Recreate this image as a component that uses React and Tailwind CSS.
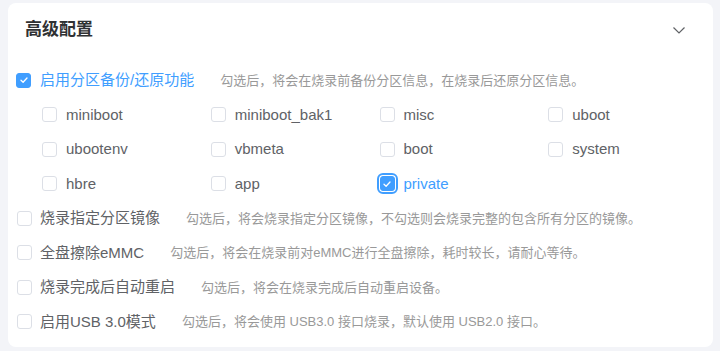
import { useState } from "react";

// 高级配置面板
const partitions = [
  "miniboot",
  "miniboot_bak1",
  "misc",
  "uboot",
  "ubootenv",
  "vbmeta",
  "boot",
  "system",
  "hbre",
  "app",
  "private",
];

const options = [
  {
    key: "image",
    label: "烧录指定分区镜像",
    desc: "勾选后，将会烧录指定分区镜像，不勾选则会烧录完整的包含所有分区的镜像。",
  },
  {
    key: "erase",
    label: "全盘擦除eMMC",
    desc: "勾选后，将会在烧录前对eMMC进行全盘擦除，耗时较长，请耐心等待。",
  },
  {
    key: "reboot",
    label: "烧录完成后自动重启",
    desc: "勾选后，将会在烧录完成后自动重启设备。",
  },
  {
    key: "usb3",
    label: "启用USB 3.0模式",
    desc: "勾选后，将会使用 USB3.0 接口烧录，默认使用 USB2.0 接口。",
  },
];

function Box({ checked, focused }) {
  return (
    <span
      className={
        "flex h-[15px] w-[15px] shrink-0 items-center justify-center rounded-[3px] border " +
        (checked
          ? "border-[#409eff] bg-[#409eff]"
          : "border-[#dcdfe6] bg-white") +
        (focused ? " outline-2 outline-offset-1 outline-[#409eff]" : "")
      }
    >
      {checked && (
        <svg width="10" height="10" viewBox="0 0 10 10" fill="none">
          <path
            d="M2 5.2 4.1 7.2 8 3"
            stroke="white"
            strokeWidth="1.3"
            strokeLinecap="round"
            strokeLinejoin="round"
          />
        </svg>
      )}
    </span>
  );
}

export default function App() {
  const [backup, setBackup] = useState(true);
  const [selected, setSelected] = useState({ private: true });
  const [flags, setFlags] = useState({});

  return (
    <div
      className="min-h-screen bg-[#f3f4f8] px-[8px] pt-[3px]"
      style={{ fontFamily: '"Liberation Sans", "Noto Sans CJK SC", sans-serif' }}
    >
      <div className="w-[705px] rounded-[8px] bg-white pb-[8px]">
        {/* Header */}
        <div className="flex h-[60px] items-center justify-between pb-[6px] pl-[17px] pr-[27px]">
          <h2 className="text-[17px] font-bold text-[#303133]">高级配置</h2>
          <svg width="14" height="14" viewBox="0 0 14 14" fill="none">
            <path d="M1.5 4.5 7 10 12.5 4.5" stroke="#606266" strokeWidth="1.2" />
          </svg>
        </div>

        <div className="px-[8px]">
          {/* Backup row */}
          <label
            className="flex h-[34.5px] cursor-pointer items-center"
            onClick={(e) => {
              e.preventDefault();
              setBackup(!backup);
            }}
          >
            <Box checked={backup} />
            <span
              className={
                "ml-[9px] text-[15px] " +
                (backup ? "text-[#409eff]" : "text-[#606266]")
              }
            >
              启用分区备份/还原功能
            </span>
            <span className="ml-[26px] text-[13px] text-[#999]">
              勾选后，将会在烧录前备份分区信息，在烧录后还原分区信息。
            </span>
          </label>

          {/* Partition grid */}
          <div className="ml-[26px] grid w-[675px] grid-cols-4">
            {partitions.map((p) => (
              <label
                key={p}
                className="flex h-[34.5px] cursor-pointer items-center"
                onClick={(e) => {
                  e.preventDefault();
                  setSelected({ ...selected, [p]: !selected[p] });
                }}
              >
                <Box checked={!!selected[p]} focused={p === "private"} />
                <span
                  className={
                    "ml-[9px] text-[15px] " +
                    (selected[p] ? "text-[#409eff]" : "text-[#606266]")
                  }
                >
                  {p}
                </span>
              </label>
            ))}
          </div>

          {/* Other options */}
          {options.map((o) => (
            <label
              key={o.key}
              className="flex h-[34.5px] cursor-pointer items-center pl-px"
              onClick={(e) => {
                e.preventDefault();
                setFlags({ ...flags, [o.key]: !flags[o.key] });
              }}
            >
              <Box checked={!!flags[o.key]} />
              <span
                className={
                  "ml-[8px] text-[15px] " +
                  (flags[o.key] ? "text-[#409eff]" : "text-[#606266]")
                }
              >
                {o.label}
              </span>
              <span className="ml-[26px] text-[13px] text-[#999]">{o.desc}</span>
            </label>
          ))}
        </div>
      </div>
    </div>
  );
}
